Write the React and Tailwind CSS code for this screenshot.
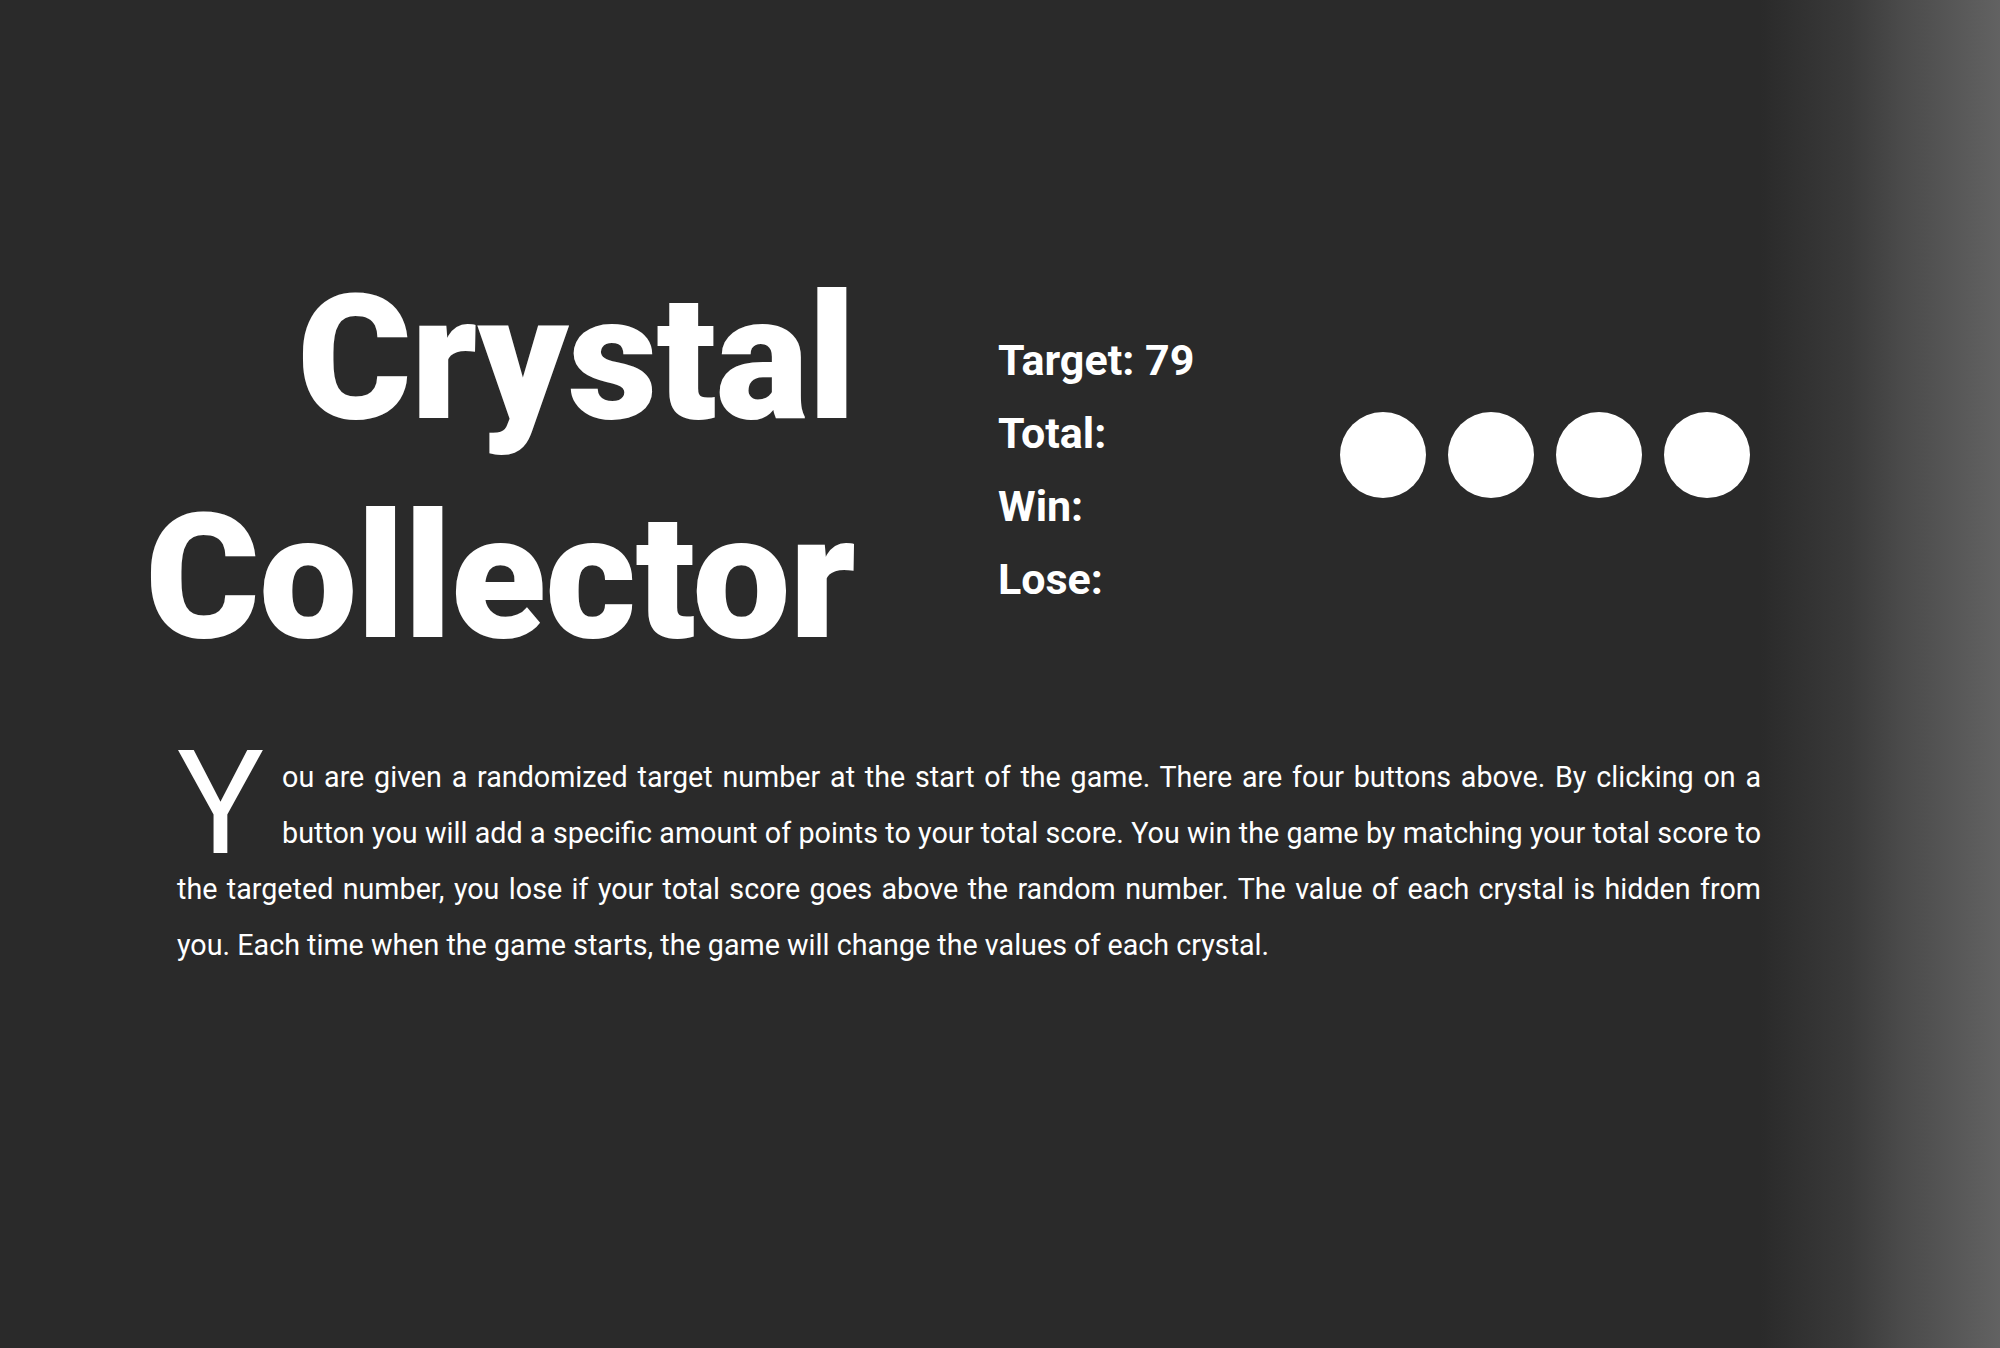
export default function App() {
  const crystals = [0, 1, 2, 3];
  return (
    <div
      className="min-h-[1348px] w-full text-white bg-[linear-gradient(to_right,#2a2a2a_0%,#2a2a2a_88%,#3a3a3a_92.5%,#4a4a4a_95%,#626262_100%)]"
      style={{ fontFamily: "Roboto, 'Liberation Sans', sans-serif" }}
    >
      <div className="flex pt-[249px]">
        <h1 className="w-[855px] shrink-0 text-right text-[175px] leading-[219px] font-black tracking-[-0.9px]">
          Crystal
          <br />
          Collector
        </h1>
        <div className="ml-[143px] mt-[75px] w-[342px] shrink-0 text-[43px] leading-[73px] font-bold">
          <div>Target: 79</div>
          <div>Total:</div>
          <div>Win:</div>
          <div>Lose:</div>
        </div>
        <div className="mt-[163px] flex gap-[22px]">
          {crystals.map((c) => (
            <button
              key={c}
              className="h-[86px] w-[86px] rounded-full bg-white"
              aria-label={`crystal ${c + 1}`}
            />
          ))}
        </div>
      </div>
      <p className="mx-[177px] mt-[62px] w-[1584px] text-justify text-[28.7px] leading-[56px] font-normal">
        <span className="float-left pr-[18px] text-[145px] leading-[0.75] font-normal">Y</span>
        ou are given a randomized target number at the start of the game. There are four buttons above. By clicking on a button you will add a specific amount of points to your total score. You win the game by matching your total score to the targeted number, you lose if your total score goes above the random number. The value of each crystal is hidden from you. Each time when the game starts, the game will change the values of each crystal.
      </p>
    </div>
  );
}
